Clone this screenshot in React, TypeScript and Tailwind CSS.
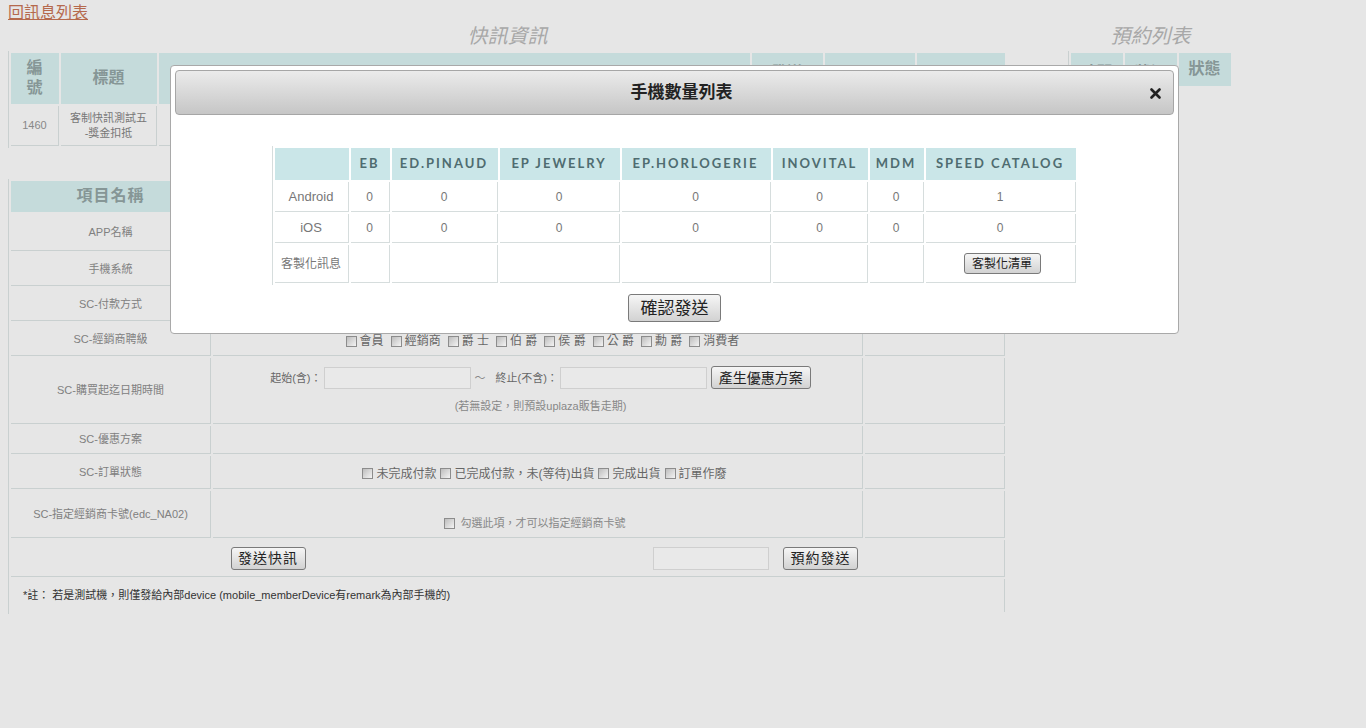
import React from "react";

const Box = () => (
  <span className="inline-block w-[11px] h-[11px] border border-[#8c8c8c] bg-linear-to-br from-[#bdbdbd] to-[#f4f4f4] shrink-0" />
);

const Check = ({ label }: { label: string }) => (
  <span className="inline-flex items-center gap-[3px]">
    <Box />
    <span>{label}</span>
  </span>
);

const Btn = ({ children, className }: { children: React.ReactNode; className: string }) => (
  <button
    className={`border border-[#7a7a7a] rounded-[3px] bg-linear-to-b from-[#f6f6f6] to-[#d2d2d2] text-[#222] leading-none ${className}`}
  >
    {children}
  </button>
);

const th = "border-r border-b border-[#c5dbdb] bg-[#c5dbdb] text-[#869696] font-bold text-[16px] text-center";
const td = "border-r border-b border-[#c9d0d0] text-center";
const lbl = "w-[200px] border-r border-b border-[#c9d0d0] text-center text-[11px] text-[#808080]";
const mth = "border-r border-b border-[#cae6e8] bg-[#cae6e8] text-[#4f6c70] font-['Lato',sans-serif] font-bold text-[13px] tracking-[2px] text-center";
const mtd = "border-r border-b border-[#d6dddd] bg-white text-center text-[12px] text-[#777]";

const Modal = () => (
  <div className="absolute left-[170px] top-[65px] w-[1009px] h-[269px] bg-white border border-[#a9a9a9] rounded-[4px] p-[4px] flex flex-col items-center">
    <div className="w-full h-[45px] border border-[#a6a6a6] rounded-[4px] bg-linear-to-b from-[#ebebeb] to-[#c6c6c6] flex items-center justify-center relative">
      <span className="text-[17px] font-bold text-[#222] pl-[14px]">手機數量列表</span>
      <svg className="absolute right-[12px] top-[17px]" width="11" height="11" viewBox="0 0 11 11">
        <path d="M1.5 1.5 L9.5 9.5 M9.5 1.5 L1.5 9.5" stroke="#222" strokeWidth="2.6" strokeLinecap="round" />
      </svg>
    </div>
    <table className="mt-[31px] border-separate border-spacing-[2px] border-l border-[#d6dddd] table-fixed w-[806px]">
      <thead>
        <tr>
          <th className={`${mth} w-[74px] h-[32px]`}></th>
          <th className={`${mth} w-[39px]`}>EB</th>
          <th className={`${mth} w-[106px]`}>ED.PINAUD</th>
          <th className={`${mth} w-[120px]`}>EP JEWELRY</th>
          <th className={`${mth} w-[149px]`}>EP.HORLOGERIE</th>
          <th className={`${mth} w-[95px]`}>INOVITAL</th>
          <th className={`${mth} w-[54px]`}>MDM</th>
          <th className={`${mth} w-[150px]`}>SPEED CATALOG</th>
        </tr>
      </thead>
      <tbody>
        <tr>
          <td className={`${mtd} h-[30px] text-[13px]`}>Android</td>
          <td className={mtd}>0</td>
          <td className={mtd}>0</td>
          <td className={mtd}>0</td>
          <td className={mtd}>0</td>
          <td className={mtd}>0</td>
          <td className={mtd}>0</td>
          <td className={mtd}>1</td>
        </tr>
        <tr>
          <td className={`${mtd} h-[29px] text-[13px]`}>iOS</td>
          <td className={mtd}>0</td>
          <td className={mtd}>0</td>
          <td className={mtd}>0</td>
          <td className={mtd}>0</td>
          <td className={mtd}>0</td>
          <td className={mtd}>0</td>
          <td className={mtd}>0</td>
        </tr>
        <tr>
          <td className={`${mtd} h-[38px] text-[11px] text-[#555]`}>客製化訊息</td>
          <td className={mtd}></td>
          <td className={mtd}></td>
          <td className={mtd}></td>
          <td className={mtd}></td>
          <td className={mtd}></td>
          <td className={mtd}></td>
          <td className={mtd}>
            <Btn className="ml-[4px] w-[77px] h-[21px] text-[12px]">客製化清單</Btn>
          </td>
        </tr>
      </tbody>
    </table>
    <Btn className="mt-[9px] w-[93px] h-[28px] text-[17px]">確認發送</Btn>
  </div>
);

export default function App() {
  return (
    <div className="relative min-h-[728px] bg-[#e6e6e6] text-[#777] font-['Liberation_Sans','Noto_Sans_CJK_TC',sans-serif]">
      <div className="pl-[8px] h-[23px] leading-[25px]">
        <a className="text-[16px] text-[#b5694d] underline">回訊息列表</a>
      </div>
      <div className="flex">
        <div className="ml-[8px] w-[999px]">
          <div className="h-[28px] leading-[26px] text-center italic text-[20px] text-[#a8a8a8]">快訊資訊</div>
          <table className="border-separate border-spacing-[2px] border-l border-[#c9d0d0] table-fixed w-[999px]">
            <thead>
              <tr>
                <th className={`${th} w-[48px] h-[50px] leading-[20px]`}>編<br />號</th>
                <th className={`${th} w-[96px]`}>標題</th>
                <th className={`${th} w-[591px]`}>內容</th>
                <th className={`${th} w-[71px] leading-[20px] pt-[10px]`}>發送<br />時間</th>
                <th className={`${th} w-[90px]`}>發送狀態</th>
                <th className={`${th} w-[88px]`}>操作</th>
              </tr>
            </thead>
            <tbody>
              <tr>
                <td className={`${td} h-[40px] text-[11px] text-[#888]`}>1460</td>
                <td className={`${td} text-[11px] leading-[15px]`}>客制快訊測試五<br />-獎金扣抵</td>
                <td className={td}></td>
                <td className={td}></td>
                <td className={td}></td>
                <td className={td}></td>
              </tr>
            </tbody>
          </table>

          <table className="mt-[31px] border-separate border-spacing-[2px] border-l border-[#c9d0d0] table-fixed w-[999px]">
            <tbody>
              <tr>
                <th className={`${th} w-[200px] h-[31px] text-[15px] tracking-[1px] text-[#6f8080]`}>項目名稱</th>
                <th className={`${th} w-[650px] text-[15px]`}>內容</th>
                <th className={`${th} w-[140px] text-[15px]`}>備註</th>
              </tr>
              <tr>
                <td className={`${lbl} h-[37px]`}>APP名稱</td>
                <td className={td}></td>
                <td className={td}></td>
              </tr>
              <tr>
                <td className={`${lbl} h-[33px]`}>手機系統</td>
                <td className={td}></td>
                <td className={td}></td>
              </tr>
              <tr>
                <td className={`${lbl} h-[33px]`}>SC-付款方式</td>
                <td className={td}></td>
                <td className={td}></td>
              </tr>
              <tr>
                <td className={`${lbl} h-[33px]`}>SC-經銷商聘級</td>
                <td className={`${td} text-[12px] text-[#666]`}>
                  <div className="flex justify-center items-center gap-[7px] pl-[10px] pt-[4px]">
                    <Check label="會員" />
                    <Check label="經銷商" />
                    <Check label="爵 士" />
                    <Check label="伯 爵" />
                    <Check label="侯 爵" />
                    <Check label="公 爵" />
                    <Check label="勳 爵" />
                    <Check label="消費者" />
                  </div>
                </td>
                <td className={td}></td>
              </tr>
              <tr>
                <td className={`${lbl} h-[66px]`}>SC-購買起迄日期時間</td>
                <td className={`${td} text-[11px] text-[#666]`}>
                  <div className="flex flex-col items-center gap-[9px] pl-[6px]">
                    <div className="flex items-center">
                      <span>起始(含)：</span>
                      <span className="ml-[2px] w-[147px] h-[22px] border border-[#cfcfcf] bg-[#e9e9e9]" />
                      <span className="ml-[4px] mr-[10px] text-[#888]">～</span>
                      <span>終止(不含)：</span>
                      <span className="ml-[2px] w-[147px] h-[22px] border border-[#cfcfcf] bg-[#e9e9e9]" />
                      <Btn className="ml-[4px] w-[100px] h-[23px] text-[14px]">產生優惠方案</Btn>
                    </div>
                    <div className="text-[11px] text-[#888]">(若無設定，則預設uplaza販售走期)</div>
                  </div>
                </td>
                <td className={td}></td>
              </tr>
              <tr>
                <td className={`${lbl} h-[28px]`}>SC-優惠方案</td>
                <td className={td}></td>
                <td className={td}></td>
              </tr>
              <tr>
                <td className={`${lbl} h-[33px]`}>SC-訂單狀態</td>
                <td className={`${td} text-[12px] text-[#666]`}>
                  <div className="flex justify-center items-center gap-[4px] pt-[3px] pl-[14px]">
                    <Check label="未完成付款" />
                    <Check label="已完成付款，未(等待)出貨" />
                    <Check label="完成出貨" />
                    <Check label="訂單作廢" />
                  </div>
                </td>
                <td className={td}></td>
              </tr>
              <tr>
                <td className={`${lbl} h-[47px]`}>SC-指定經銷商卡號(edc_NA02)</td>
                <td className={`${td} text-[11px] text-[#888]`}>
                  <div className="flex justify-center items-center gap-[6px] pt-[18px] pr-[6px]">
                    <Box />
                    <span>勾選此項，才可以指定經銷商卡號</span>
                  </div>
                </td>
                <td className={td}></td>
              </tr>
              <tr>
                <td colSpan={3} className={`${td} h-[37px]`}>
                  <div className="flex items-center">
                    <div className="w-[514px] flex justify-center">
                      <Btn className="w-[75px] h-[23px] text-[14px] tracking-[1px]">發送快訊</Btn>
                    </div>
                    <div className="flex-1 flex justify-center items-center gap-[14px] pr-[18px]">
                      <span className="w-[116px] h-[23px] border border-[#cfcfcf] bg-[#e9e9e9]" />
                      <Btn className="w-[75px] h-[23px] text-[14px] tracking-[1px]">預約發送</Btn>
                    </div>
                  </div>
                </td>
              </tr>
              <tr>
                <td colSpan={3} className="h-[33px] border-r border-[#c9d0d0] text-left pl-[12px] text-[11px] text-[#333]">
                  *註： 若是測試機，則僅發給內部device (mobile_memberDevice有remark為內部手機的)
                </td>
              </tr>
            </tbody>
          </table>
        </div>

        <div className="ml-[61px] w-[165px]">
          <div className="h-[28px] leading-[26px] text-center italic text-[20px] text-[#a8a8a8]">預約列表</div>
          <table className="border-separate border-spacing-[2px] border-l border-[#c9d0d0] table-fixed w-[165px]">
            <thead>
              <tr>
                <th className={`${th} w-[52px] h-[32px] pt-[8px]`}>時間</th>
                <th className={`${th} w-[52px] pt-[8px]`}>狀況</th>
                <th className={`${th} w-[52px]`}>狀態</th>
              </tr>
            </thead>
          </table>
        </div>
      </div>
      <Modal />
    </div>
  );
}
